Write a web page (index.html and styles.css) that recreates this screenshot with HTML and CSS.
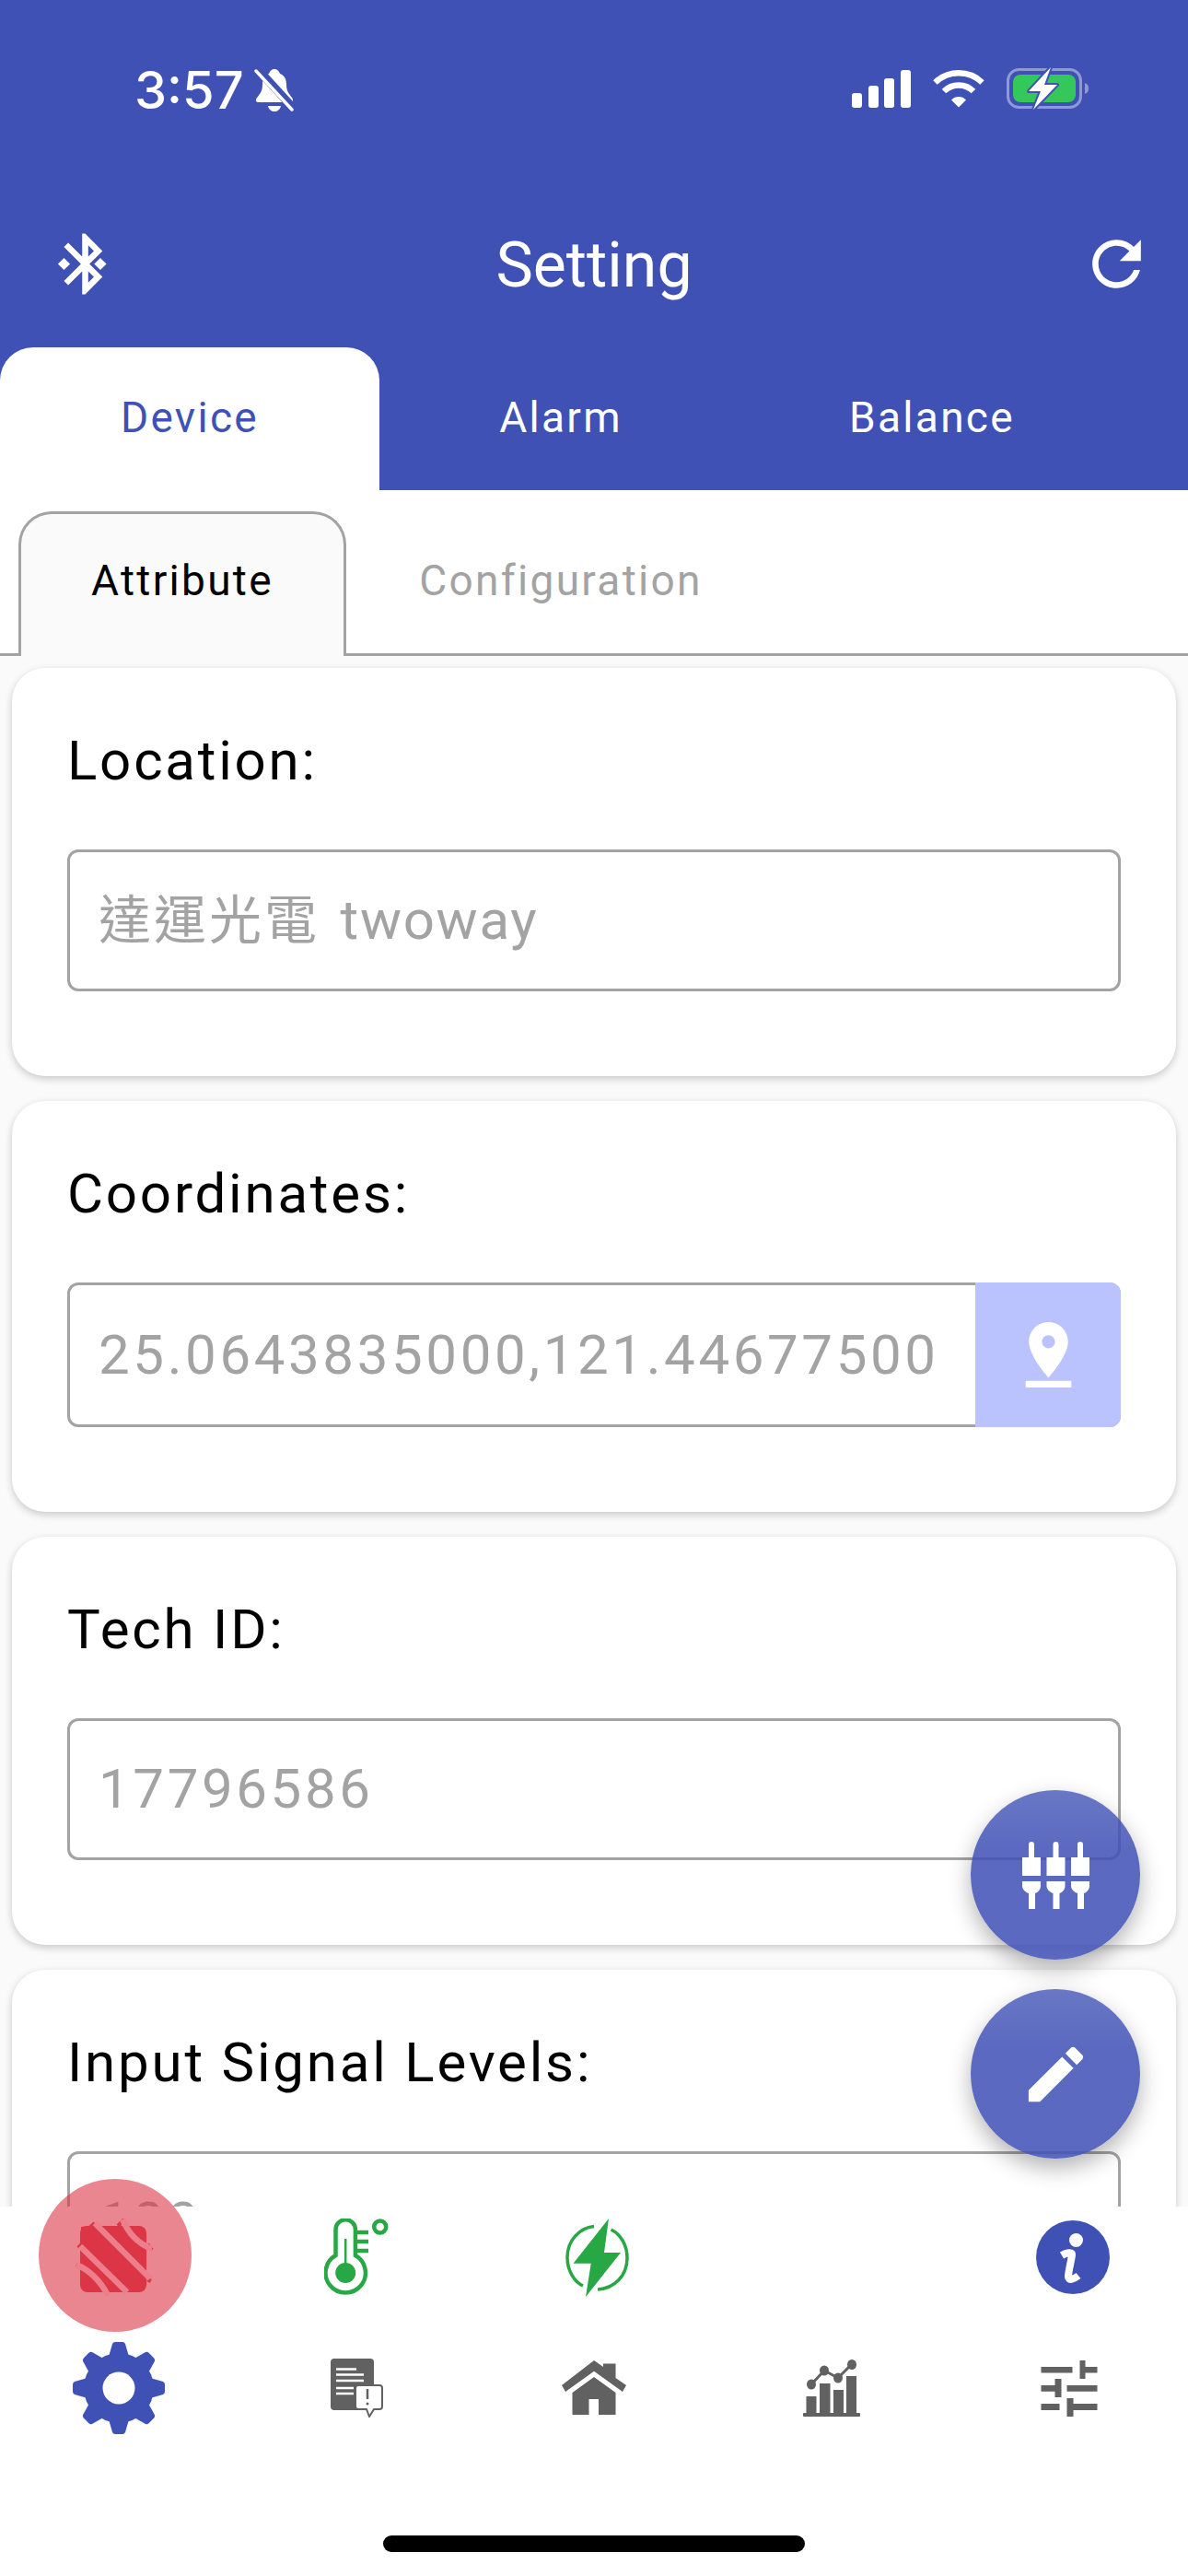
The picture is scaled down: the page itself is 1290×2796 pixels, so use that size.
FILE: index.html
```html
<!DOCTYPE html>
<html lang="en">
<head>
  <meta charset="UTF-8" />
  <meta name="viewport" content="width=device-width, initial-scale=1.0"/>
  <title>Setting</title>
  <link rel="stylesheet" href="styles.css">
</head>
<body>
  <div class="phone">
    <header class="top-header">
      <div class="status-bar">
        <div class="status-left">
          <span class="clock">3:57</span>
          <svg class="bell-icon" viewBox="0 0 44 48">
            <path d="M22 1c3 0 5 2 6 5 5 2 7 6 7 12 0 6 2 9 6 14 2 3 1 5-2 5H5c-3 0-4-2-2-5 4-5 6-8 6-14 0-6 2-10 7-12 1-3 3-5 6-5z" fill="#fff"/>
            <path d="M15 41h14c-1 4-4 6-7 6s-6-2-7-6z" fill="#fff"/>
            <path d="M3 0l41 45" stroke="#3f51b5" stroke-width="9"/>
            <path d="M2 3l39 42" stroke="#fff" stroke-width="3.5" stroke-linecap="round"/>
          </svg>
        </div>
        <div class="status-right">
          <svg class="signal-icon" viewBox="0 0 64 41" fill="#fff">
            <rect x="0" y="25" width="11" height="16" rx="3"/>
            <rect x="18" y="17" width="11" height="24" rx="3"/>
            <rect x="35" y="9" width="11" height="32" rx="3"/>
            <rect x="53" y="0" width="11" height="41" rx="3"/>
          </svg>
          <svg class="wifi-icon" viewBox="0 0 56 41" fill="none" stroke="#fff" stroke-width="6.5">
            <path d="M2.5 13.5a37 37 0 0 1 51 0"/>
            <path d="M12 23a23 23 0 0 1 32 0"/>
            <path d="M20 32.5l8 8 8-8a11 11 0 0 0-16 0z" fill="#fff" stroke="none"/>
          </svg>
          <svg class="battery-icon" viewBox="0 0 90 46">
            <rect x="1.5" y="2.5" width="79" height="41" rx="12" fill="none" stroke="#8f9ad4" stroke-width="3"/>
            <rect x="7" y="8" width="68" height="30" rx="8" fill="#34c759"/>
            <path d="M85 17c3 1 4 3 4 6s-1 5-4 6z" fill="#8f9ad4"/>
            <path d="M48 0L24 26h13l-8 20 26-27H41z" fill="#fff" stroke="#3f51b5" stroke-width="4" paint-order="stroke" stroke-linejoin="round"/>
          </svg>
        </div>
      </div>
      <div class="app-bar">
        <svg class="bar-icon" viewBox="0 0 24 24" fill="#fff"><path d="M7 12l-2-2-2 2 2 2 2-2zm10.71-4.29L12 2h-1v7.59L6.41 5 5 6.41 10.59 12 5 17.59 6.41 19 11 14.41V22h1l5.71-5.71-4.3-4.29 4.3-4.29zM13 5.83l1.88 1.88L13 9.59V5.83zm1.88 10.46L13 18.17v-3.76l1.88 1.88zM17 10l-2 2 2 2 2-2-2-2z"/></svg>
        <h1 class="app-title">Setting</h1>
        <svg class="bar-icon" viewBox="0 0 24 24" fill="#fff"><path d="M17.65 6.35C16.2 4.9 14.21 4 12 4c-4.42 0-7.99 3.58-7.99 8s3.57 8 7.99 8c3.73 0 6.84-2.55 7.73-6h-2.08c-.82 2.33-3.04 4-5.65 4-3.31 0-6-2.69-6-6s2.69-6 6-6c1.66 0 3.14.69 4.22 1.78L13 11h7V4l-2.35 2.35z"/></svg>
      </div>
      <nav class="main-tabs">
        <div class="main-tab active">Device</div>
        <div class="main-tab tab-alarm">Alarm</div>
        <div class="main-tab">Balance</div>
      </nav>
    </header>

    <div class="sub-tabs">
      <div class="sub-tab active">Attribute</div>
      <div class="sub-tab">Configuration</div>
    </div>

    <main class="content">
      <section class="card">
        <div class="card-label">Location:</div>
        <div class="field"><span class="field-value field-mixed"><span class="cjk">達運光電</span> twoway</span></div>
      </section>
      <section class="card">
        <div class="card-label">Coordinates:</div>
        <div class="field field-tall">
          <span class="field-value">25.0643835000,121.44677500</span>
          <div class="field-button">
            <svg class="pin-icon" viewBox="0 0 24 24" fill="#fff"><path d="M18 8c0-3.31-2.69-6-6-6S6 4.69 6 8c0 4.5 6 11 6 11s6-6.5 6-11zm-8 0c0-1.1.9-2 2-2s2 .9 2 2-.89 2-2 2c-1.1 0-2-.9-2-2zM5 20v2h14v-2H5z"/></svg>
          </div>
        </div>
      </section>
      <section class="card">
        <div class="card-label">Tech ID:</div>
        <div class="field"><span class="field-value">17796586</span></div>
      </section>
      <section class="card">
        <div class="card-label">Input Signal Levels:</div>
        <div class="field"><span class="field-value">100</span></div>
      </section>
    </main>

    <button class="fab fab-cable">
      <svg class="cable-icon" viewBox="0 0 73 73" fill="#fff">
        <g id="plug">
          <path d="M7 17V3a3 3 0 0 1 6 0v14h7v20H0V17z"/>
          <path d="M0 43h20v5c0 4-3 7-6 8v17H7V56c-3-1-7-4-7-8z"/>
        </g>
        <use href="#plug" x="26.5"/>
        <use href="#plug" x="53"/>
      </svg>
    </button>
    <button class="fab fab-edit">
      <svg class="edit-icon" viewBox="0 0 24 24" fill="#fff"><path d="M3 17.25V21h3.75L17.81 9.94l-3.75-3.75L3 17.25zM20.71 7.04c.39-.39.39-1.02 0-1.41l-2.34-2.34c-.39-.39-1.02-.39-1.41 0l-1.83 1.83 3.75 3.75 1.83-1.83z"/></svg>
    </button>

    <nav class="bottom-nav">
      <div class="nav-row nav-row-top">
        <div class="nav-item">
          <span class="alert-badge"></span>
          <svg class="stripe-icon" viewBox="0 0 92 84">
            <rect x="8" y="8" width="72" height="72" rx="8" fill="#dc3545"/>
            <path d="M18 10l-9 1M6 32l5-6M56 1l-7 7M86 34l-5-6M4 50l6 3M38 83l-3-6M24 5l-6 5M84 65l-2 4" fill="none" stroke="#dc3545" stroke-width="4"/>
            <g fill="none" stroke="#ec7f8b" stroke-width="6.500">
              <path d="M24 5l60 60"/>
              <path d="M8 30l51 50"/>
              <path d="M54 1c6 14 16 26 32 32"/>
              <path d="M4 50c14 6 26 18 34 33"/>
            </g>
          </svg>
        </div>
        <div class="nav-item">
          <svg class="thermo-icon" viewBox="0 0 70 84" fill="none" stroke="#28a745" stroke-width="4.5">
            <path d="M12.5 40V12a10.7 10.7 0 0 1 21.4 0v28a21.7 21.7 0 1 1-21.4 0z"/>
            <path d="M34 15h14M34 25h14M34 35h14"/>
            <path d="M23.2 22v30" stroke-width="2.5"/>
            <circle cx="23.2" cy="59" r="11" fill="#28a745" stroke="none"/>
            <circle cx="60.7" cy="9" r="6.5"/>
          </svg>
        </div>
        <div class="nav-item">
          <svg class="charge-icon" viewBox="0 0 71 85">
            <path d="M32 8.5C16 10 3 24 3 42c0 15 8 27 17 31M50.5 12C61 17 68 29 68 43c0 19-14 33-32 34" fill="none" stroke="#28a745" stroke-width="3.5"/>
            <path d="M48 0L9.5 48.7H28.7L23 85 61 37H43z" fill="#28a745"/>
          </svg>
        </div>
        <div class="nav-item"></div>
        <div class="nav-item">
          <svg class="info-icon" viewBox="0 0 80 80">
            <circle cx="40" cy="40" r="40" fill="#3f51b5"/>
            <circle cx="43.5" cy="21.5" r="7.5" fill="#fff"/>
            <path d="M28 38c5-3 11-4 11-1 0 4-4 18-4 24 0 5 6 3 11-1" fill="none" stroke="#fff" stroke-width="8"/>
          </svg>
        </div>
      </div>
      <div class="nav-row">
        <div class="nav-item">
          <svg class="gear-icon" viewBox="0 0 100 100" fill="#3f51b5">
            <circle cx="50" cy="50" r="38"/>
            <g id="tooth"><path d="M39 16 43 2Q44 0 46 0H54Q56 0 57 2L61 16z"/></g>
            <use href="#tooth" transform="rotate(45 50 50)"/>
            <use href="#tooth" transform="rotate(90 50 50)"/>
            <use href="#tooth" transform="rotate(135 50 50)"/>
            <use href="#tooth" transform="rotate(180 50 50)"/>
            <use href="#tooth" transform="rotate(225 50 50)"/>
            <use href="#tooth" transform="rotate(270 50 50)"/>
            <use href="#tooth" transform="rotate(315 50 50)"/>
            <circle cx="50" cy="50" r="17.5" fill="#fff"/>
          </svg>
        </div>
        <div class="nav-item">
          <svg class="doc-icon" viewBox="0 0 57 64">
            <rect x="0" y="0" width="47" height="56" rx="4" fill="#616161"/>
            <path d="M6 11.5h22M6 17.5h30M6 24h30M6 32h19M6 38h19" stroke="#fff" stroke-width="2.5"/>
            <path d="M30 29h23a3 3 0 0 1 3 3v20a3 3 0 0 1-3 3h-6l-5 8-3-8H30a3 3 0 0 1-3-3V32a3 3 0 0 1 3-3z" fill="#fff" stroke="#616161" stroke-width="2"/>
            <path d="M40 33v11" stroke="#616161" stroke-width="2.5"/>
            <circle cx="40" cy="49" r="1.5" fill="#616161"/>
          </svg>
        </div>
        <div class="nav-item">
          <svg class="home-icon" viewBox="0 0 70 60" fill="#616161">
            <path d="M0 27L35 0l10 7V3.5h13.500V19L70 27l-4 7L35 11.700 4 34z"/>
            <path d="M35 18l23.500 17V59H40V42H29.500V59H11.500V35z"/>
          </svg>
        </div>
        <div class="nav-item">
          <svg class="chart-icon" viewBox="0 0 62 62" fill="#616161">
            <rect x="0" y="58" width="62" height="4" rx="1"/>
            <rect x="3.500" y="40" width="11" height="19"/>
            <rect x="18" y="26" width="11.500" height="33"/>
            <rect x="33" y="33" width="11" height="26"/>
            <rect x="47" y="18" width="11" height="41"/>
            <path d="M9 27l14-15 15 8 15-15" fill="none" stroke="#616161" stroke-width="3"/>
            <ellipse cx="9" cy="27" rx="5" ry="5.500"/>
            <ellipse cx="23" cy="12" rx="5" ry="5.500"/>
            <ellipse cx="38" cy="20" rx="5" ry="5.500"/>
            <ellipse cx="53" cy="5.500" rx="5" ry="5.500"/>
          </svg>
        </div>
        <div class="nav-item">
          <svg class="slider-icon" viewBox="0 0 61 61" fill="#616161">
            <path d="M0 7h34v6.500H0zM42 0h6v7h13v6.500H48V20h-6z"/>
            <path d="M15 20h7v20h-7v-6.300H0V27h15zM28 27h33v6.700H28z"/>
            <path d="M28 41h7v6h26v7H35v7h-7zM0 47h20v7H0z"/>
          </svg>
        </div>
      </div>
      <div class="home-indicator"></div>
    </nav>
  </div>
</body>
</html>
```

FILE: styles.css
```css
* {
  box-sizing: border-box;
}
body {
  margin: 0;
  font-family: "Roboto", "Noto Sans CJK TC", sans-serif;
  background-color: #fff;
}
.phone {
  position: relative;
  width: 1290px;
  height: 2796px;
  overflow: hidden;
  background-color: #fafafa;
}
.top-header {
  height: 532px;
  background-color: #3f51b5;
  color: #fff;
}
.status-bar {
  height: 250px;
  padding: 72px 107px 0 146px;
  display: flex;
  justify-content: space-between;
  align-items: flex-start;
}
.status-left {
  display: flex;
  align-items: center;
  gap: 11px;
}
.clock {
  font-family: "Inter", sans-serif;
  font-size: 56px;
  font-weight: 500;
  line-height: 52px;
}
.bell-icon {
  width: 44px;
  height: 48px;
}
.status-right {
  display: flex;
  align-items: center;
  gap: 24px;
  margin-top: 1px;
}
.signal-icon {
  width: 64px;
  height: 41px;
}
.wifi-icon {
  width: 56px;
  height: 41px;
}
.battery-icon {
  width: 90px;
  height: 46px;
}
.app-bar {
  height: 78px;
  display: flex;
  align-items: center;
  padding: 0 38px 0 53px;
  margin-top: -3px;
}
.bar-icon {
  width: 79px;
  height: 79px;
}
.app-title {
  flex: 1;
  margin: 0;
  padding: 3px 15px 0 0;
  text-align: center;
  font-size: 68px;
  font-weight: 400;
}
.main-tabs {
  display: flex;
  height: 155px;
  margin-top: 52px;
}
.main-tab {
  width: 412px;
  display: flex;
  align-items: center;
  justify-content: center;
  font-size: 46px;
  letter-spacing: 2.3px;
  padding-bottom: 3px;
}
.tab-alarm {
  width: 394px;
}
.main-tab.active {
  color: #3f51b5;
  background-color: #fff;
  border-radius: 36px 36px 0 0;
}
.sub-tabs {
  height: 180px;
  padding: 23px 0 0 20px;
  display: flex;
  background-color: #fff;
  border-bottom: 3px solid #a3a3a3;
}
.sub-tab {
  width: 466px;
  height: 157px;
  display: flex;
  align-items: center;
  justify-content: center;
  font-size: 46px;
  letter-spacing: 2.3px;
  color: #a3a3a3;
  padding-bottom: 8px;
}
.sub-tab.active {
  width: 356px;
  color: #000;
  background-color: #fafafa;
  border: 3px solid #a3a3a3;
  border-bottom: none;
  border-radius: 36px 36px 0 0;
  margin-bottom: -3px;
  padding-bottom: 10px;
}
.content {
  padding: 13px 13px 0;
  display: flex;
  flex-direction: column;
  gap: 27px;
}
.card {
  background-color: #fff;
  border-radius: 36px;
  padding: 68px 60px 92px;
  box-shadow: 0 3px 8px rgba(0,0,0,0.2);
}
.card-label {
  font-size: 60px;
  line-height: 66px;
  letter-spacing: 2.8px;
  color: #000;
  margin-bottom: 63px;
}
.field {
  height: 154px;
  border: 3px solid #a3a3a3;
  border-radius: 12px;
  display: flex;
  align-items: center;
  justify-content: space-between;
  padding-left: 31px;
}
.field-tall {
  height: 157px;
}
.field-value {
  font-size: 60px;
  line-height: 70px;
  letter-spacing: 3.6px;
  color: #a3a3a3;
}
.field-mixed {
  word-spacing: 6px;
  letter-spacing: 1.7px;
}
.cjk {
  font-size: 57px;
  line-height: 1;
  letter-spacing: 3px;
}
.field-button {
  flex: none;
  width: 158px;
  height: 157px;
  margin: -3px -3px -3px 0;
  border-radius: 0 12px 12px 0;
  background-color: #bbc3ff;
  display: flex;
  align-items: center;
  justify-content: center;
}
.pin-icon {
  width: 85px;
  height: 85px;
}
.fab {
  position: absolute;
  left: 1054px;
  width: 184px;
  height: 184px;
  border: none;
  border-radius: 50%;
  padding: 0;
  background: linear-gradient(rgba(63,81,181,0.78), rgba(63,81,181,0.86) 35%);
  box-shadow: 0 10px 24px rgba(0,0,0,0.3);
  display: flex;
  align-items: center;
  justify-content: center;
}
.fab-cable {
  top: 1943px;
}
.fab-edit {
  top: 2159px;
}
.cable-icon {
  width: 73px;
  height: 73px;
}
.edit-icon {
  width: 79px;
  height: 79px;
}
.bottom-nav {
  position: absolute;
  left: 0;
  right: 0;
  top: 2395px;
  height: 401px;
  background-color: #fff;
}
.nav-row {
  display: grid;
  grid-template-columns: repeat(5, 258px);
  align-items: center;
  justify-items: center;
}
.nav-row-top {
  height: 110px;
  margin-bottom: 37px;
}
.nav-item {
  position: relative;
  display: flex;
  align-items: center;
  justify-content: center;
}
.alert-badge {
  position: absolute;
  left: -45px;
  top: -43px;
  width: 166px;
  height: 166px;
  border-radius: 50%;
  background-color: rgba(220,53,69,0.6);
}
.stripe-icon {
  position: relative;
  width: 92px;
  height: 84px;
  margin-left: -8px;
}
.thermo-icon {
  width: 70px;
  height: 84px;
}
.charge-icon {
  width: 71px;
  height: 85px;
  margin-left: 6px;
}
.info-icon {
  width: 80px;
  height: 80px;
  margin-left: 8px;
}
.gear-icon {
  width: 102px;
  height: 100px;
}
.doc-icon {
  width: 57px;
  height: 64px;
}
.home-icon {
  width: 70px;
  height: 60px;
}
.chart-icon {
  width: 62px;
  height: 62px;
}
.slider-icon {
  width: 62px;
  height: 61px;
}
.home-indicator {
  position: absolute;
  left: 416px;
  top: 357px;
  width: 458px;
  height: 18px;
  background-color: #000;
  border-radius: 9px;
}
```
